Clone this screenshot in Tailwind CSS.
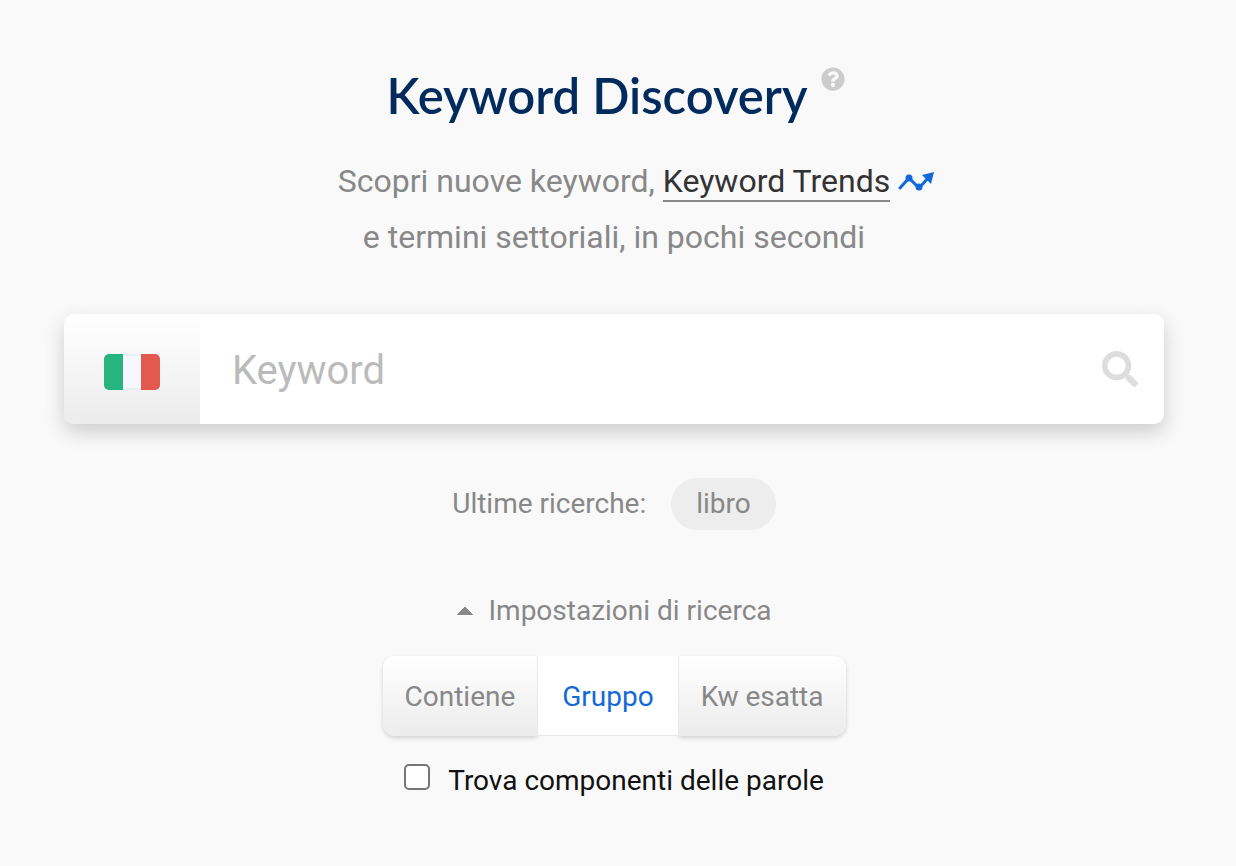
<!DOCTYPE html>
<html lang="it">
<head>
    <meta charset="UTF-8">
    <meta name="viewport" content="width=device-width, initial-scale=1.0">
    <title>Keyword Discovery</title>
    <script src="https://cdn.jsdelivr.net/npm/@tailwindcss/browser@4"></script>
</head>
<body class="bg-[#f9f9f9] min-h-screen font-['Roboto',sans-serif] text-[#888]">
    <main class="flex flex-col items-center pt-16 pl-16 pr-[72px]">
        <!-- Heading -->
        <div class="flex items-start gap-[14px] pl-1">
            <h1 class="font-['Lato',sans-serif] text-[49px] leading-[62px] font-semibold text-[#002b5c]">Keyword Discovery</h1>
            <button type="button" aria-label="Aiuto" class="mt-[3px]">
                <svg class="size-6" viewBox="0 0 512 512" fill="#ccc">
                    <path d="M504 256c0 137-111 248-248 248S8 393 8 256 119 8 256 8s248 111 248 248zM262.700 90c-54.500 0-89.300 23-116.500 63.800-3.500 5.300-2.400 12.400 2.700 16.300l34.700 26.300c5.200 3.900 12.600 3 16.700-2.100 17.900-22.700 30.100-35.800 57.300-35.800 20.400 0 45.700 13.100 45.700 33 0 15-12.400 22.700-32.500 34C247.100 238.500 216 254.900 216 296v4c0 6.600 5.400 12 12 12h56c6.600 0 12-5.400 12-12v-1.300c0-28.500 83.200-29.600 83.200-106.700 0-58-60.200-102-116.500-102zM256 338c-25.400 0-46 20.600-46 46s20.600 46 46 46 46-20.600 46-46-20.600-46-46-46z"/>
                </svg>
            </button>
        </div>

        <p class="mt-[27px] text-[32px] leading-[56px] text-center">
            Scopri nuove keyword,
            <a href="#" class="relative inline-block leading-[38px] border-b-2 border-[#888] text-[#333]">Keyword Trends<svg class="absolute left-full top-2 ml-2 w-9 h-6" viewBox="0 0 36 24" fill="#1169d9">
                    <path d="M2 18 11 8 21 18 31 7" fill="none" stroke="#1169d9" stroke-width="3" stroke-linecap="round"/>
                    <circle cx="11" cy="8" r="3.500"/>
                    <circle cx="21" cy="17" r="3.500"/>
                    <path d="M24 5 36 2 33 14Z"/>
                </svg></a><br>
            e termini settoriali, in pochi secondi
        </p>

        <!-- Search bar -->
        <form class="mt-[49px] flex w-full h-[110px] rounded-[10px] bg-white shadow-[0_8px_20px_rgba(0,0,0,0.18)]">
            <button type="button" aria-label="Italia" class="flex w-[136px] items-center justify-center rounded-l-[10px] bg-linear-to-b from-white to-[#ececec] pt-[6px]">
                <svg class="w-14 h-9" viewBox="0 0 56 36">
                    <rect x="18" width="20" height="36" fill="#e9eef2"/>
                    <rect x="18" y="2" width="20" height="32" fill="#f5f8ff"/>
                    <path d="M19 0H5a5 5 0 0 0-5 5v26a5 5 0 0 0 5 5h14z" fill="#26b47f"/>
                    <path d="M37 0h14a5 5 0 0 1 5 5v26a5 5 0 0 1-5 5H37z" fill="#e2594f"/>
                </svg>
            </button>
            <input type="text" aria-label="Keyword" placeholder="Keyword" class="min-w-0 flex-1 px-8 pt-1 text-[40px] text-[#333] placeholder:text-[#bbb] outline-none">
            <button type="submit" aria-label="Cerca" class="mr-[26px]">
                <svg class="size-9" viewBox="0 0 512 512" fill="#ddd">
                    <path d="M505 442.700L405.300 343c-4.500-4.500-10.600-7-17-7H372c27.600-35.300 44-79.700 44-128C416 93.100 322.900 0 208 0S0 93.100 0 208s93.100 208 208 208c48.300 0 92.700-16.400 128-44v16.300c0 6.400 2.500 12.500 7 17l99.700 99.700c9.400 9.400 24.600 9.400 33.900 0l28.300-28.300c9.400-9.400 9.400-24.600.1-34zM208 336c-70.700 0-128-57.200-128-128 0-70.700 57.200-128 128-128 70.700 0 128 57.200 128 128 0 70.700-57.200 128-128 128z"/>
                </svg>
            </button>
        </form>

        <div class="mt-[54px] flex items-center gap-[25px] text-[28px] leading-[52px]">
            <span>Ultime ricerche:</span>
            <a href="#" class="rounded-full bg-[#ededed] px-[25px]">libro</a>
        </div>

        <!-- Search settings -->
        <button type="button" class="mt-[61px] flex items-center gap-[14px] text-[28px] leading-10">
            <svg class="w-[18px] h-[10px]" viewBox="0 0 18 10" fill="#888"><path d="M1.500 8.500 9 1 16.500 8.500z" stroke="#888" stroke-linejoin="round"/></svg>
            Impostazioni di ricerca
        </button>

        <div class="mt-[25px] flex h-20 text-[28px]">
            <button type="button" class="rounded-l-xl bg-linear-to-b from-white to-[#ececec] px-[22px] pt-[2px] shadow-[0_2px_4px_rgba(0,0,0,0.16)]">Contiene</button>
            <button type="button" class="relative border-x border-b border-[#e8e8e8] bg-white px-6 pt-[3px] text-[#1169d9]">Gruppo</button>
            <button type="button" class="rounded-r-xl bg-linear-to-b from-white to-[#ececec] px-[22px] pt-[2px] shadow-[0_2px_4px_rgba(0,0,0,0.16)]">Kw esatta</button>
        </div>

        <label class="mt-[25px] flex items-start gap-[18px] text-[28px] leading-10 text-[#111]">
            <input type="checkbox" class="mt-[3px] size-[26px] appearance-none rounded-[5px] border-2 border-[#767676] bg-white checked:bg-[#1169d9]">
            Trova componenti delle parole
        </label>
    </main>
</body>
</html>
